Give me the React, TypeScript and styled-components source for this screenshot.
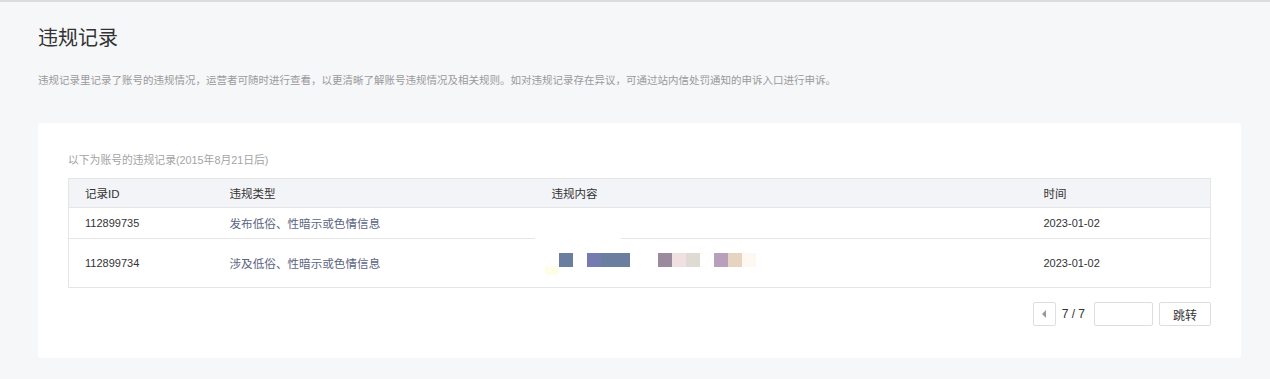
import React from "react";
import styled, { createGlobalStyle } from "styled-components";

const GlobalStyle = createGlobalStyle`
  html, body {
    margin: 0;
    padding: 0;
    background: #f6f7f9;
  }
  body {
    font-family: "Liberation Sans", "Noto Sans CJK SC", sans-serif;
    font-size: 12px;
    color: #333;
  }
`;

const Page = styled.div`
  min-height: 379px;
  box-sizing: border-box;
  border-top: 2px solid #dcdcdc;
  padding: 0 29px 0 38px;
`;

const Title = styled.h1`
  margin: 0;
  padding-top: 22px;
  font-size: 20px;
  font-weight: normal;
  line-height: 28px;
  color: #333;
`;

const Desc = styled.p`
  margin: 20px 0 0;
  font-size: 10.5px;
  line-height: 16px;
  color: #9a9a9a;
`;

const Card = styled.div`
  margin-top: 35px;
  background: #fff;
  border-radius: 3px;
  padding: 30px 30px 32px;
`;

const SubTitle = styled.div`
  font-size: 10.8px;
  line-height: 14px;
  color: #a3a3a3;
  margin-bottom: 11px;
`;

const Table = styled.table`
  width: 100%;
  border-collapse: collapse;
  border: 1px solid #e5e5e5;
  table-layout: fixed;
`;

const Th = styled.th<{ $w?: number }>`
  box-sizing: border-box;
  width: ${({ $w }) => ($w ? `${$w}px` : "auto")};
  height: 29px;
  padding: 0 17px;
  background: #f3f4f7;
  text-align: left;
  font-weight: normal;
  font-size: 11.5px;
  color: #333;
  border-bottom: 1px solid #e5e5e5;

  &:first-child {
    padding-left: 16px;
  }
`;

const Tr = styled.tr<{ $h: number }>`
  height: ${({ $h }) => $h}px;
  border-top: 1px solid #e6e6e6;
`;

const Td = styled.td<{ $tone?: "type" | "num" }>`
  padding: 0 17px;
  font-size: ${({ $tone }) => ($tone === "num" ? "11px" : "11.6px")};
  color: ${({ $tone }) => ($tone === "type" ? "#5b6480" : "#333")};
  vertical-align: middle;
  white-space: nowrap;
  position: relative;

  &:first-child {
    padding-left: 16px;
  }
`;

const Mosaic = styled.svg`
  position: absolute;
  left: 0;
  top: -1px;
`;

const Pager = styled.div`
  display: flex;
  justify-content: flex-end;
  align-items: center;
  margin-top: 14px;
`;

const PrevBtn = styled.button`
  width: 23px;
  height: 24px;
  box-sizing: border-box;
  border: 1px solid #dedede;
  border-radius: 2px;
  background: #fff;
  padding: 0;
  display: flex;
  align-items: center;
  justify-content: center;
`;

const Arrow = styled.span`
  width: 0;
  height: 0;
  border-top: 4px solid transparent;
  border-bottom: 4px solid transparent;
  border-right: 4px solid #999;
`;

const PageText = styled.span`
  margin: 0 9px 0 6px;
  color: #333;
  font-size: 12px;
`;

const JumpInput = styled.input`
  width: 59px;
  height: 24px;
  box-sizing: border-box;
  border: 1px solid #dedede;
  border-radius: 2px;
  outline: none;
  padding: 0 6px;
`;

const JumpBtn = styled.button`
  width: 52px;
  height: 24px;
  margin-left: 6px;
  box-sizing: border-box;
  border: 1px solid #dedede;
  border-radius: 2px;
  background: #fff;
  color: #333;
  font-family: inherit;
  font-size: 12px;
  padding: 0;
`;

const records = [
  { id: "112899735", type: "发布低俗、性暗示或色情信息", time: "2023-01-02", blurred: false },
  { id: "112899734", type: "涉及低俗、性暗示或色情信息", time: "2023-01-02", blurred: true },
];

function Pixelated() {
  return (
    <Mosaic width="230" height="40" viewBox="0 0 230 40">
      <rect x="0" y="0" width="86" height="2" fill="#fff" />
      <rect x="10" y="28" width="14" height="9" rx="3" fill="#fefee6" />
      <rect x="24" y="15" width="14" height="14" fill="#6a7ea0" />
      <rect x="52" y="15" width="14" height="14" fill="#757ab0" />
      <rect x="66" y="15" width="29" height="14" fill="#6a7ea0" />
      <rect x="123" y="15" width="14" height="14" fill="#9b89a0" />
      <rect x="137" y="15" width="14" height="14" fill="#f0e0e2" />
      <rect x="151" y="15" width="14" height="14" fill="#dfdbd2" />
      <rect x="179" y="15" width="14" height="14" fill="#b8a0bd" />
      <rect x="193" y="15" width="14" height="14" fill="#e6d4c0" />
      <rect x="207" y="15" width="14" height="14" fill="#fdf8f2" />
    </Mosaic>
  );
}

export default function App() {
  return (
    <>
      <GlobalStyle />
      <Page>
        <Title>违规记录</Title>
        <Desc>
          违规记录里记录了账号的违规情况，运营者可随时进行查看，以更清晰了解账号违规情况及相关规则。如对违规记录存在异议，可通过站内信处罚通知的申诉入口进行申诉。
        </Desc>
        <Card>
          <SubTitle>以下为账号的违规记录(2015年8月21日后)</SubTitle>
          <Table>
            <thead>
              <tr>
                <Th $w={144}>记录ID</Th>
                <Th $w={322}>违规类型</Th>
                <Th $w={492}>违规内容</Th>
                <Th>时间</Th>
              </tr>
            </thead>
            <tbody>
              {records.map((r) => (
                <Tr key={r.id} $h={r.blurred ? 49 : 31}>
                  <Td $tone="num">{r.id}</Td>
                  <Td $tone="type">{r.type}</Td>
                  <Td>{r.blurred && <Pixelated />}</Td>
                  <Td $tone="num">{r.time}</Td>
                </Tr>
              ))}
            </tbody>
          </Table>
          <Pager>
            <PrevBtn>
              <Arrow />
            </PrevBtn>
            <PageText>7 / 7</PageText>
            <JumpInput />
            <JumpBtn>跳转</JumpBtn>
          </Pager>
        </Card>
      </Page>
    </>
  );
}
